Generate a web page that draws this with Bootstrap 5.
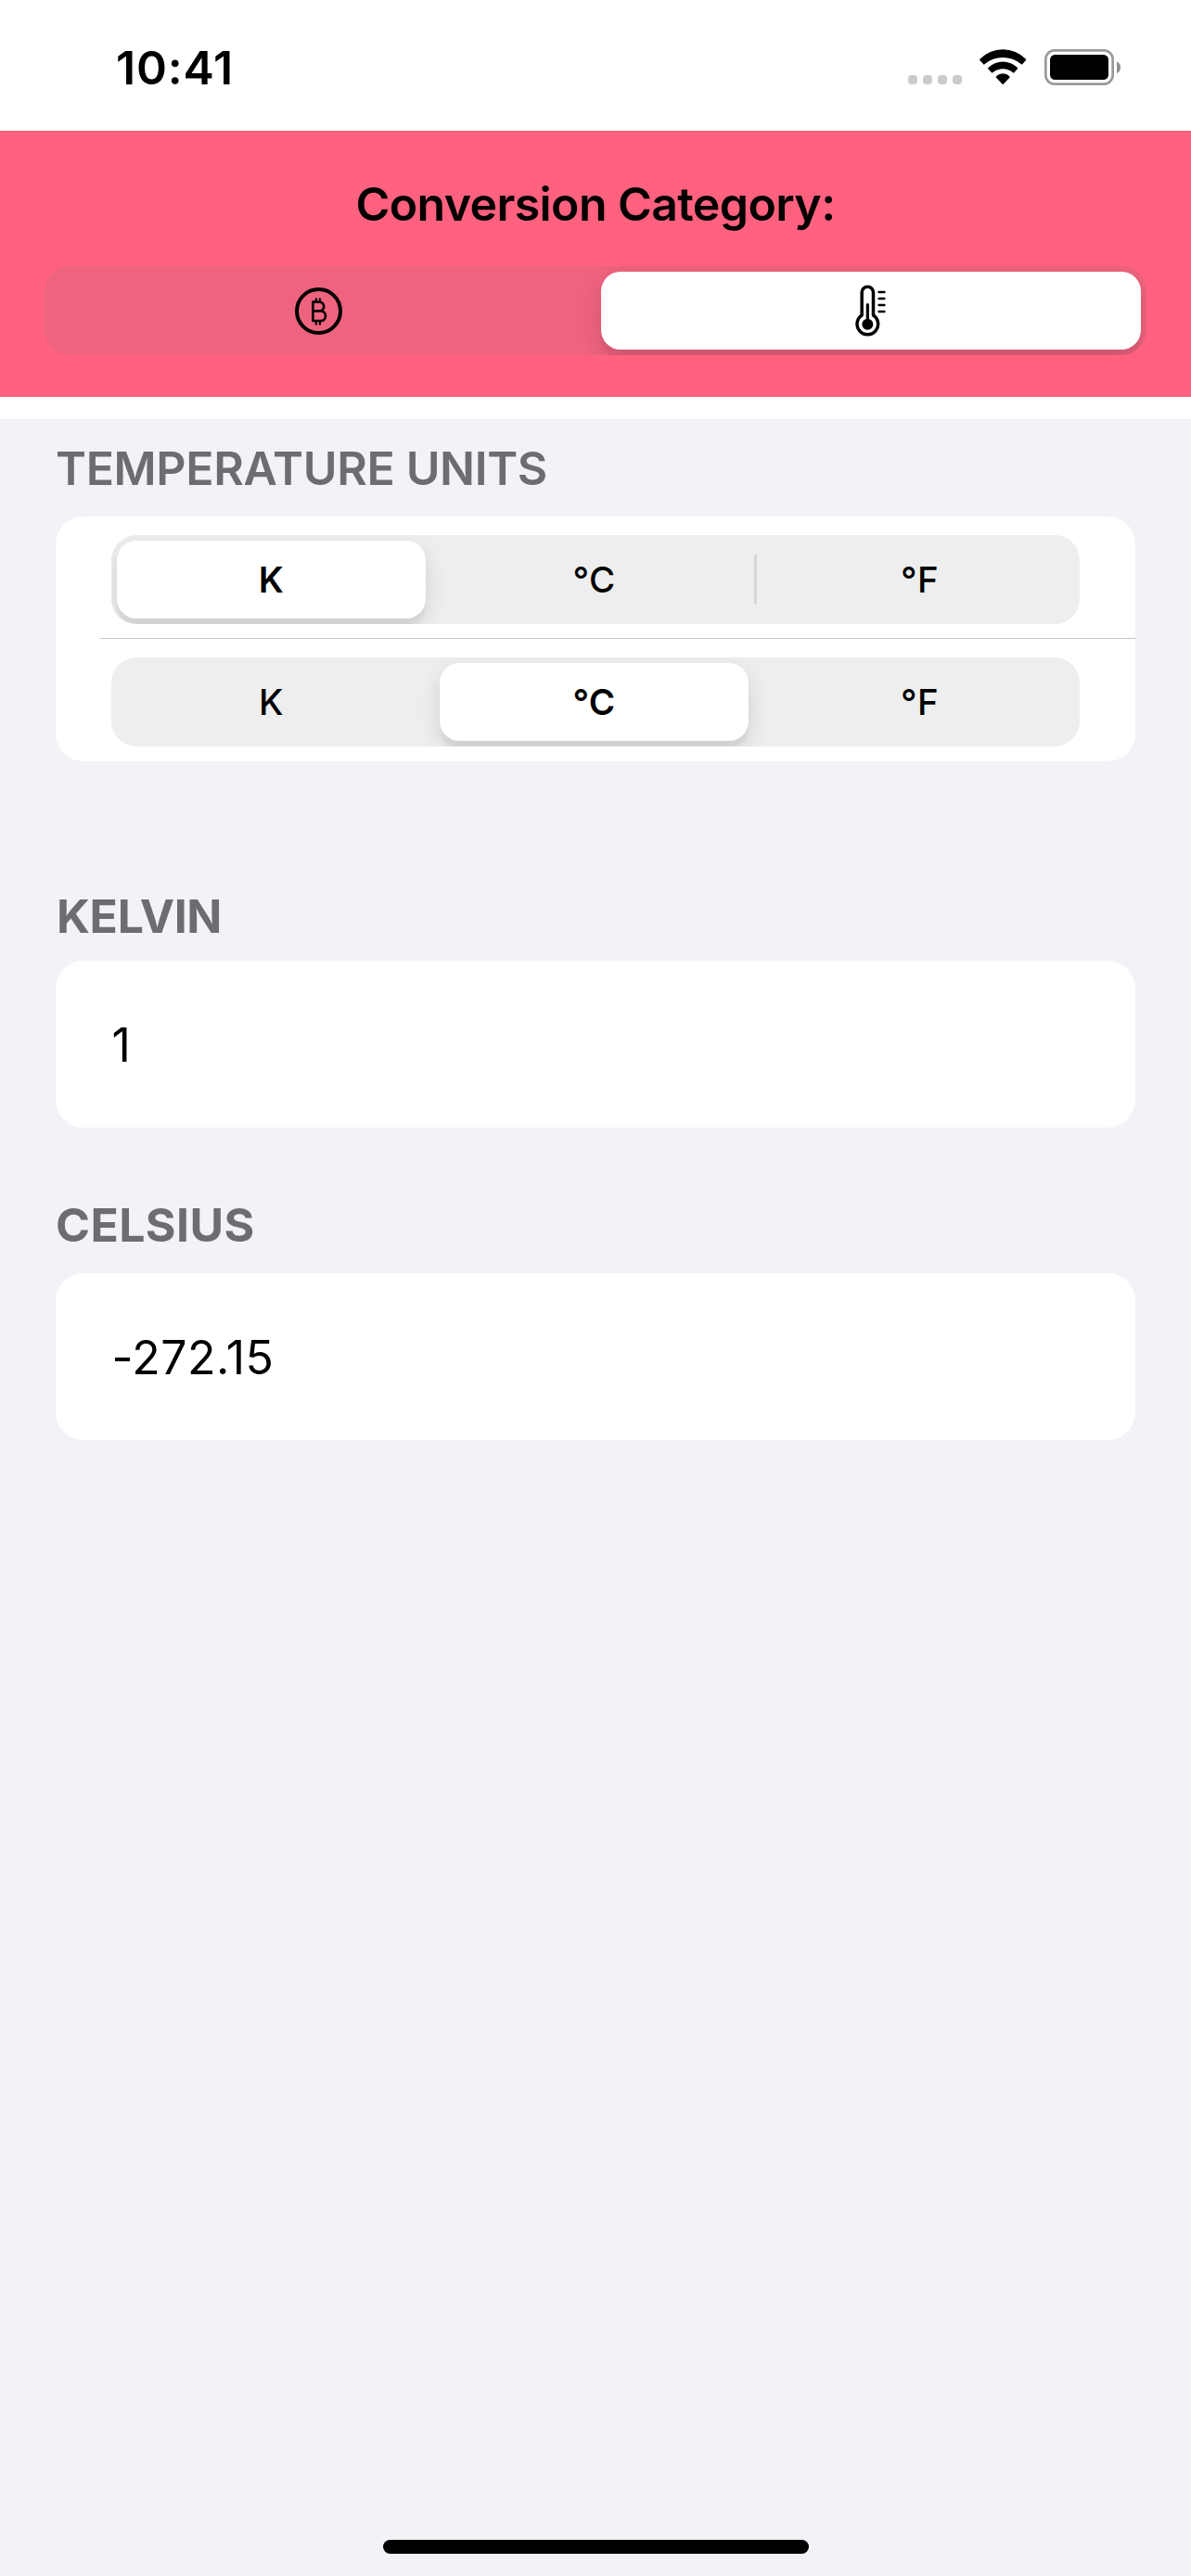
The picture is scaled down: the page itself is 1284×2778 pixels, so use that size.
<!DOCTYPE html>
<html lang="en">
<head>
<meta charset="utf-8">
<meta name="viewport" content="width=device-width, initial-scale=1">
<title>Conversion</title>
<link href="https://cdn.jsdelivr.net/npm/bootstrap@5.3.0/dist/css/bootstrap.min.css" rel="stylesheet">
<style>
  body { font-family: Inter, "Liberation Sans", sans-serif; font-size: 50px; line-height: 60px; color: #000; background: #fff; }
  .app-screen { height: 2778px; overflow: hidden; }
  .status-bar { height: 141px; padding: 4px 75.67px 0 125px; }
  .status-time { font-weight: 600; letter-spacing: .8px; }
  .status-icons { gap: 19.33px; }
  .category-bar { height: 287px; padding: 49px 48px 0; background: #ff617f; }
  .category-title { font-size: 50px; line-height: 61px; font-weight: 600; letter-spacing: -.6px; margin-bottom: 36px; }
  .segmented { height: 96px; border-radius: 27px; background: rgba(118,118,120,.125); overflow: hidden; font-size: 38.5px; }
  .segment { flex: 1 1 0; min-width: 0; padding: 0; border: 0; margin: 6px 9px 6px 6px; border-radius: 21px; background: none; color: #000; font: inherit; font-weight: 500; line-height: 84px; letter-spacing: .4px; }
  .segment:last-child { margin: 6px 6px 6px 9px; }
  .segmented.pair .segment:first-child { flex: 0 0 579px; }
  .segmented.pair .segment:last-child { margin-left: 6px; }
  .segment.chosen { background: #fff; font-weight: 600; box-shadow: 0 9px 24px rgba(0,0,0,.12), 0 9px 3px rgba(0,0,0,.04); }
  .segment-divider { width: 3px; height: 54px; margin: 0 0 0 -3px; border-radius: 2px; background: #d6d6d6; }
  .form-area { margin-top: 24px; padding: 23px 60px 24px; background: #f2f2f7; }
  .section-label { font-size: 50px; line-height: 60px; color: #6d6c72; margin: 0; }
  .units-label { font-weight: 600; letter-spacing: -.35px; margin-bottom: 22px; }
  .kelvin-label { font-weight: 700; letter-spacing: -.35px; margin: 137px 0 18px 1px; }
  .celsius-label { font-weight: 700; letter-spacing: .4px; margin: 75px 0 22px; }
  .panel { border-radius: 30px; background: #fff; }
  .units-panel { height: 264px; padding: 20px 0 16px; }
  .units-panel .segmented { margin: 0 60px; }
  .row-rule { height: 1px; margin: 15px 0 20px 48px; background: #c6c6c8; }
  .value-panel { height: 180px; padding: 2px 60.5px 0; letter-spacing: .5px; }
  .home-bar { width: 459px; height: 15px; border-radius: 8px; background: #000; }
</style>
<script src="https://cdn.jsdelivr.net/npm/bootstrap@5.3.0/dist/js/bootstrap.bundle.min.js"></script>
</head>
<body>
<div class="app-screen d-flex flex-column">
  <div class="status-bar d-flex align-items-center justify-content-between">
    <span class="status-time">10:41</span>
    <div class="status-icons d-flex align-items-center">
      <svg width="58" height="39" viewBox="57 69 174 117" fill="#cbcbcb" aria-hidden="true">
        <rect x="57" y="153" width="30" height="30" rx="11"/><rect x="105" y="153" width="30" height="30" rx="11"/><rect x="153" y="153" width="30" height="30" rx="11"/><rect x="201" y="153" width="30" height="30" rx="11"/>
      </svg>
      <svg width="50.33" height="39" viewBox="289 69 151 117" aria-hidden="true">
        <path d="M290 101A104 104 0 0 1 439 101Q441 103 439 105L428 117Q426 120 423 117A91 91 0 0 0 306 117Q303 120 301 117L290 105Q288 103 290 101Z"/>
        <path d="M317 129A67.7 67.7 0 0 1 412 129Q414 131 412 133L401 145Q399 147 396 144A51 51 0 0 0 333 144Q330 147 328 145L317 133Q315 131 317 129Z"/>
        <path d="M343 157A30 30 0 0 1 386 157Q388 159 386 161L366 182Q364.500 184 363 182L343 161Q341 159 343 157Z"/>
      </svg>
      <svg width="82.33" height="39" viewBox="498 69 247 117" aria-hidden="true">
        <rect x="502" y="73" width="217" height="109" rx="29" fill="none" stroke="#999" stroke-width="8"/>
        <rect x="516" y="87" width="189" height="81" rx="16"/>
        <path d="M732 109Q744 115 744 128Q744 141 732 147Z" fill="#909090"/>
      </svg>
    </div>
  </div>

  <header class="category-bar">
    <h1 class="category-title text-center">Conversion Category:</h1>
    <div class="segmented pair d-flex" role="group" aria-label="Conversion category">
      <button type="button" class="segment d-flex align-items-center justify-content-center" aria-label="Currency">
        <svg width="51" height="51" viewBox="84 60 153 153" fill="none" stroke="#000" stroke-linecap="round" stroke-linejoin="round">
          <circle cx="160.500" cy="136.500" r="70.500" stroke-width="12"/>
          <path d="M142 107H163A14.500 14.500 0 0 1 163 136H142M163 136H167A16 16 0 0 1 167 168H142V107" stroke-width="8"/>
          <path d="M152.500 97V105M164.500 97V105M152.500 170V179M164.500 170V179" stroke-width="6.500"/>
        </svg>
      </button>
      <button type="button" class="segment chosen d-flex align-items-center justify-content-center" aria-label="Temperature">
        <svg width="33.33" height="56" viewBox="98 52 100 168" fill="none" stroke="#000" stroke-linecap="round" stroke-linejoin="round">
          <path d="M119.500 151V77A18.500 18.500 0 0 1 156.500 77V151A34 34 0 1 1 119.500 151Z" stroke-width="10.500"/>
          <path d="M138 117V175" stroke-width="9.500"/>
          <circle cx="138" cy="180" r="18" fill="#000" stroke="none"/>
          <path d="M175 76H192M175 97H192M175 118H192M175 139H192" stroke-width="8"/>
        </svg>
      </button>
    </div>
  </header>

  <main class="form-area flex-grow-1 d-flex flex-column">
    <h2 class="section-label units-label">TEMPERATURE UNITS</h2>
    <section class="panel units-panel">
      <div class="segmented d-flex align-items-center" role="group" aria-label="From">
        <button type="button" class="segment chosen">K</button>
        <button type="button" class="segment">°C</button>
        <span class="segment-divider"></span>
        <button type="button" class="segment">°F</button>
      </div>
      <div class="row-rule"></div>
      <div class="segmented d-flex align-items-center" role="group" aria-label="To">
        <button type="button" class="segment">K</button>
        <button type="button" class="segment chosen">°C</button>
        <button type="button" class="segment">°F</button>
      </div>
    </section>

    <h2 class="section-label kelvin-label">KELVIN</h2>
    <section class="panel value-panel d-flex align-items-center">1</section>

    <h2 class="section-label celsius-label">CELSIUS</h2>
    <section class="panel value-panel d-flex align-items-center">-272.15</section>

    <div class="home-bar mt-auto mx-auto"></div>
  </main>
</div>
</body>
</html>
